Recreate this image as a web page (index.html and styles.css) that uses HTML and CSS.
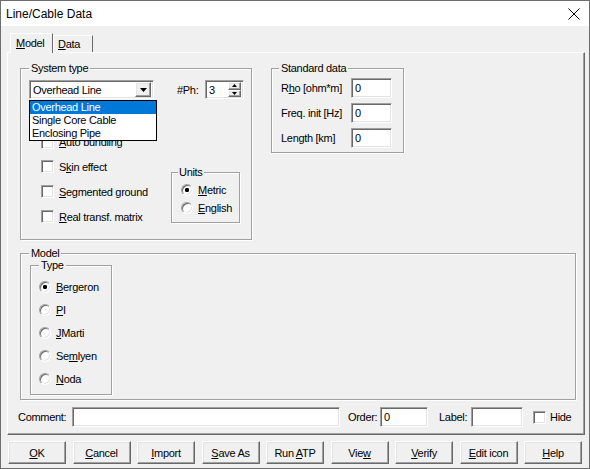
FILE: index.html
```html
<!DOCTYPE html>
<html>
<head>
<meta charset="utf-8">
<link rel="stylesheet" href="styles.css">
</head>
<body>
<div class="window">
  <div class="titlebar">
    <span class="title">Line/Cable Data</span>
    <svg class="close" width="12" height="12" viewBox="0 0 12 12"><path d="M0.5 0.5 L11.5 11.5 M11.5 0.5 L0.5 11.5" stroke="#000" stroke-width="1" fill="none"/></svg>
  </div>
  <div class="client">
    <div class="tabs">
      <div class="tab active"><u>M</u>odel</div>
      <div class="tab"><u>D</u>ata</div>
    </div>
    <div class="panel">
      <div class="row1">
        <div class="group systype">
          <div class="legend">System type</div>
          <div class="sysrow">
            <div class="combo">
              <div class="combo-field">
                <span class="combo-text">Overhead Line</span>
                <div class="combo-btn raised"><svg width="7" height="4" viewBox="0 0 7 4"><path d="M0 0 H7 L3.5 4 Z" fill="#000"/></svg></div>
              </div>
              <ul class="droplist">
                <li class="sel">Overhead Line</li>
                <li>Single Core Cable</li>
                <li>Enclosing Pipe</li>
              </ul>
            </div>
            <span class="ph">#Ph:</span>
            <div class="spin sunken">
              <span class="spin-val">3</span>
              <div class="spin-btns">
                <div class="sb raised"><svg width="5" height="3" viewBox="0 0 5 3"><path d="M2.5 0 L5 3 H0 Z" fill="#000"/></svg></div>
                <div class="sb raised"><svg width="5" height="3" viewBox="0 0 5 3"><path d="M0 0 H5 L2.5 3 Z" fill="#000"/></svg></div>
              </div>
            </div>
          </div>
          <div class="sysbody">
            <div class="checks">
              <div class="check"><span class="cb sunken"></span><span><u>A</u>uto bundling</span></div>
              <div class="check"><span class="cb sunken"></span><span>S<u>k</u>in effect</span></div>
              <div class="check"><span class="cb sunken"></span><span><u>S</u>egmented ground</span></div>
              <div class="check"><span class="cb sunken"></span><span><u>R</u>eal transf. matrix</span></div>
            </div>
            <div class="group units">
              <div class="legend">Units</div>
              <div class="radio"><span class="rb on"></span><span><u>M</u>etric</span></div>
              <div class="radio"><span class="rb"></span><span><u>E</u>nglish</span></div>
            </div>
          </div>
        </div>
        <div class="group stddata">
          <div class="legend">Standard data</div>
          <div class="fields">
            <div class="field"><span class="flabel">R<u>h</u>o [ohm*m]</span><span class="input sunken">0</span></div>
            <div class="field"><span class="flabel">Freq. init [Hz]</span><span class="input sunken">0</span></div>
            <div class="field"><span class="flabel">Length [km]</span><span class="input sunken">0</span></div>
          </div>
        </div>
      </div>
      <div class="group model">
        <div class="legend">Model</div>
        <div class="group typebox">
          <div class="legend">Type</div>
          <div class="radios">
            <div class="radio"><span class="rb on"></span><span><u>B</u>ergeron</span></div>
            <div class="radio"><span class="rb"></span><span><u>P</u>I</span></div>
            <div class="radio"><span class="rb"></span><span><u>J</u>Marti</span></div>
            <div class="radio"><span class="rb"></span><span>Se<u>m</u>lyen</span></div>
            <div class="radio"><span class="rb"></span><span><u>N</u>oda</span></div>
          </div>
        </div>
      </div>
      <div class="commentrow">
        <span class="lbl-comment">Comment:</span>
        <span class="input sunken in-comment"></span>
        <span class="lbl-order">Order:</span>
        <span class="input sunken in-order">0</span>
        <span class="lbl-label">Label:</span>
        <span class="input sunken in-label"></span>
        <span class="cb sunken hide-cb"></span>
        <span class="lbl-hide">Hide</span>
      </div>
    </div>
    <div class="buttons">
      <div class="btn raised"><span><u>O</u>K</span></div>
      <div class="btn raised"><span><u>C</u>ancel</span></div>
      <div class="btn raised"><span><u>I</u>mport</span></div>
      <div class="btn raised"><span><u>S</u>ave As</span></div>
      <div class="btn raised"><span>Run <u>A</u>TP</span></div>
      <div class="btn raised"><span>Vie<u>w</u></span></div>
      <div class="btn raised"><span><u>V</u>erify</span></div>
      <div class="btn raised"><span><u>E</u>dit icon</span></div>
      <div class="btn raised"><span><u>H</u>elp</span></div>
    </div>
  </div>
</div>
</body>
</html>
```
FILE: styles.css
```css
* { box-sizing: border-box; }
html, body { margin: 0; padding: 0; }
body {
  width: 590px;
  height: 469px;
  overflow: hidden;
  background: #f0f0f0;
  font-family: "Liberation Sans", Arial, sans-serif;
  font-size: 11px;
  letter-spacing: -0.3px;
  color: #000;
}
u { text-decoration: underline; text-underline-offset: 1px; }

.window {
  width: 590px;
  height: 469px;
  border: 1px solid #6e6e6e;
  display: flex;
  flex-direction: column;
  background: #f0f0f0;
}
.titlebar {
  height: 25px;
  flex: none;
  background: #fff;
  display: flex;
  align-items: center;
  justify-content: space-between;
  padding: 0 9px 0 5px;
}
.title { font-size: 12px; letter-spacing: 0; }
.close { display: block; }

.client {
  flex: 1;
  padding: 7px 0 0 6px;
  display: flex;
  flex-direction: column;
}

/* raised / sunken 3D looks */
.raised {
  background: #f0f0f0;
  border: 1px solid;
  border-color: #fff #696969 #696969 #fff;
  box-shadow: inset -1px -1px 0 #a0a0a0, inset 1px 1px 0 #e3e3e3;
}
.sunken {
  background: #fff;
  border: 1px solid;
  border-color: #a0a0a0 #fff #fff #a0a0a0;
  box-shadow: inset 1px 1px 0 #696969, inset -1px -1px 0 #e3e3e3;
}

/* tabs */
.tabs {
  display: flex;
  height: 20px;
  margin-left: 3px;
  margin-bottom: -1px;
  position: relative;
  z-index: 1;
}
.tab {
  border: 1px solid;
  border-color: #fff #696969 transparent #fff;
  border-bottom: none;
  background: #f0f0f0;
  padding: 0 5px;
  line-height: 16px;
}
.tab.active {
  height: 20px;
  width: 43px;
  padding: 1px 0 0 5px;
}
.tab:not(.active) {
  margin-top: 2px;
  height: 17px;
  width: 40px;
  padding-left: 4px;
}

.panel {
  width: 578px;
  height: 383px;
  border: 1px solid;
  border-color: #fff #696969 #696969 #fff;
  box-shadow: inset -1px -1px 0 #a0a0a0;
  padding: 15px 0 0 12px;
}

/* group boxes */
.group {
  border: 1px solid #a0a0a0;
  box-shadow: 1px 1px 0 #fff, inset 1px 1px 0 #fff;
}
.legend {
  display: table;
  height: 13px;
  line-height: 13px;
  margin: -7px 0 0 8px;
  padding: 0 2px;
  background: #f0f0f0;
}

.row1 {
  display: flex;
  align-items: flex-start;
  gap: 19px;
}
.systype { width: 232px; height: 172px; }
.sysrow {
  display: flex;
  align-items: center;
  margin: 5px 0 0 8px;
  height: 19px;
}
.combo { position: relative; width: 125px; height: 19px; }
.combo-field {
  width: 125px;
  height: 19px;
  display: flex;
  align-items: center;
  background: #fff;
  border: 1px solid;
  border-color: #a0a0a0 #fff #fff #a0a0a0;
  box-shadow: inset 1px 1px 0 #696969, inset -1px -1px 0 #e3e3e3;
  padding: 2px 2px 2px 3px;
}
.combo-text { flex: 1; }
.combo-btn {
  width: 16px;
  height: 15px;
  display: flex;
  align-items: center;
  justify-content: center;
}
.combo-btn svg { display: block; margin-top: 1px; }
.droplist {
  position: absolute;
  left: 0;
  top: 20px;
  width: 128px;
  margin: 0;
  padding: 0;
  list-style: none;
  background: #fff;
  border: 1px solid #000;
  z-index: 2;
}
.droplist li {
  height: 13px;
  line-height: 13px;
  padding-left: 2px;
}
.droplist li.sel { background: #0078d7; color: #fff; }
.ph { width: 28px; margin-left: 23px; }
.spin {
  width: 39px;
  height: 19px;
  display: flex;
  align-items: center;
  padding: 2px 2px 2px 3px;
}
.spin-val { flex: 1; }
.spin-btns {
  width: 13px;
  height: 15px;
  display: flex;
  flex-direction: column;
}
.sb {
  flex: 1;
  display: flex;
  align-items: center;
  justify-content: center;
}
.sb svg { display: block; }

.sysbody {
  display: flex;
  align-items: flex-start;
  margin-top: 31px;
}
.checks {
  margin-left: 20px;
  display: grid;
  grid-template-rows: 24px 25px 25px 25px;
}
.check { display: flex; align-items: center; gap: 5px; }
.cb { display: block; width: 13px; height: 13px; flex: none; }

.units {
  width: 69px;
  height: 51px;
  margin: 42px 11px 0 auto;
}
.units .legend { margin-left: 6px; padding: 0 1px; }
.units .radio { height: 18px; margin-left: 9px; }
.units .legend + .radio { margin-top: 2px; }

.radio { display: flex; align-items: center; gap: 5px; }
.rb {
  display: block;
  flex: none;
  width: 12px;
  height: 12px;
  border-radius: 50%;
  border: 1px solid;
  border-color: #a0a0a0 #fff #fff #a0a0a0;
  background: #fff;
  box-shadow: inset 1px 1px 0 #696969, inset -1px -1px 0 #e3e3e3;
}
.rb.on { background: radial-gradient(circle at 50% 50%, #000 0 2px, #fff 2.3px); }

.stddata { width: 133px; height: 85px; }
.stddata .legend { margin-left: 7px; }
.fields {
  margin: 3px 0 0 9px;
  display: flex;
  flex-direction: column;
  gap: 5px;
}
.field { display: flex; align-items: center; height: 20px; }
.flabel { width: 70px; }
.input {
  display: flex;
  align-items: center;
  height: 20px;
  padding: 0 0 0 3px;
}
.field .input { width: 41px; }

.model {
  width: 556px;
  height: 147px;
  margin-top: 13px;
}
.typebox {
  width: 82px;
  height: 130px;
  margin: 5px 0 0 9px;
}
.radios { margin: 3px 0 0 8px; }
.radios .radio { height: 23px; }

.commentrow {
  display: flex;
  align-items: center;
  height: 20px;
  margin: 7px 0 0 -2px;
}
.lbl-comment { width: 54px; }
.in-comment { width: 268px; }
.lbl-order { width: 32px; margin-left: 8px; }
.in-order { width: 48px; }
.lbl-label { width: 32px; margin-left: 11px; }
.in-label { width: 52px; }
.hide-cb { margin-left: 10px; }
.lbl-hide { margin-left: 4px; }

.buttons {
  display: grid;
  grid-template-columns: repeat(9, 58px);
  column-gap: 6.5px;
  margin: 6px 0 0 1px;
}
.btn {
  height: 23px;
  display: flex;
  align-items: center;
  justify-content: center;
}
```
